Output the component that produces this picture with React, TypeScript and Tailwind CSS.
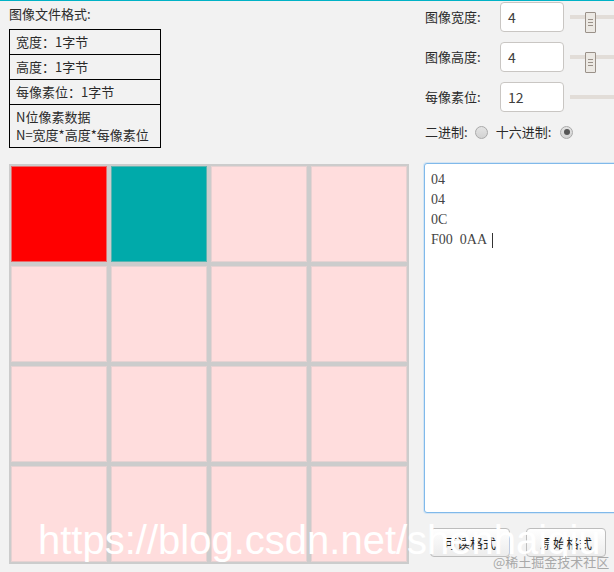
import React from "react";

const CJK = { fontFamily: '"Noto Sans CJK SC", "Noto Sans", sans-serif' };

const cells = [
  "bg-[#ff0000] border-[#e86a6a]",
  "bg-[#00aaaa] border-[#5cb4b0]",
  "bg-[#ffdddd] border-[#e6d2d2]",
  "bg-[#ffdddd] border-[#e6d2d2]",
];

function Slider({ thumb }: { thumb: boolean }) {
  return (
    <div className="relative ml-[6px] h-[29px] flex-1 flex items-center">
      <div className="h-[4px] w-full bg-[#e2ddd8]" />
      {thumb && (
        <div className="absolute left-[15px] top-[9px] flex h-[21px] w-[11px] flex-col items-center justify-center gap-[2px] rounded-[1px] border border-[#9a9189] bg-[#ece9e4]">
          <div className="h-px w-[5px] bg-[#9a9189]" />
          <div className="h-px w-[5px] bg-[#9a9189]" />
          <div className="h-px w-[5px] bg-[#9a9189]" />
        </div>
      )}
    </div>
  );
}

function InputRow({ label, value, thumb }: { label: string; value: string; thumb: boolean }) {
  return (
    <div className="flex h-[30px] items-center">
      <div className="w-[76px] shrink-0 pl-[1px] text-[13px] leading-[16px] text-[#2b2b2b]">{label}</div>
      <div className="flex h-[30px] w-[64px] shrink-0 items-center rounded-[4px] border border-[#c9c6c3] bg-white pl-[7px] text-[14px] text-[#404040]">
        {value}
      </div>
      <Slider thumb={thumb} />
    </div>
  );
}

function Radio({ checked }: { checked: boolean }) {
  return (
    <div className="flex h-[13px] w-[13px] items-center justify-center rounded-full border border-[#a9a9a9] bg-gradient-to-b from-[#e4e4e4] to-[#d2d2d2]">
      {checked && <div className="h-[6px] w-[6px] rounded-full bg-[#555]" />}
    </div>
  );
}

export default function App() {
  return (
    <div
      className="relative h-[572px] w-[614px] overflow-hidden border-t border-[#00b2c6] bg-[#f2f2f2] text-[#2b2b2b]"
      style={CJK}
    >
      {/* top section */}
      <div className="flex h-[162px]">
        <div className="w-[424px] shrink-0 pl-[9px]">
          <div className="mt-[5px] h-[16px] text-[13px] leading-[16px]">图像文件格式:</div>
          <div className="mt-[7px] w-[152px] divide-y divide-black border border-black text-[13px]">
            <div className="flex h-[25px] items-center pl-[6px] leading-[16px]">宽度：1字节</div>
            <div className="flex h-[25px] items-center pl-[6px] leading-[16px]">高度：1字节</div>
            <div className="flex h-[25px] items-center pl-[6px] leading-[16px]">每像素位：1字节</div>
            <div className="h-[42px] pl-[6px] pt-[3px] leading-[18px]">
              <div>N位像素数据</div>
              <div>N=宽度*高度*每像素位</div>
            </div>
          </div>
        </div>
        <div className="flex min-w-0 flex-1 flex-col pt-[1px]">
          <div className="flex flex-col gap-[10px]">
            <InputRow label="图像宽度:" value="4" thumb />
            <InputRow label="图像高度:" value="4" thumb />
            <InputRow label="每像素位:" value="12" thumb={false} />
          </div>
          <div className="mt-[10px] flex h-[20px] items-center text-[13px] leading-[16px]">
            <span className="pl-[1px]">二进制:</span>
            <span className="ml-[7px]"><Radio checked={false} /></span>
            <span className="ml-[8px]">十六进制:</span>
            <span className="ml-[9px]"><Radio checked /></span>
          </div>
        </div>
      </div>

      {/* bottom section */}
      <div className="flex">
        <div className="w-[424px] shrink-0 pl-[9px] pt-[1px]">
          <div className="grid w-[400px] grid-cols-4 gap-[4px] bg-[#cccccc] p-[2px]">
            {Array.from({ length: 16 }).map((_, i) => (
              <div
                key={i}
                className={`h-[96px] border ${i < 4 ? cells[i] : "bg-[#ffdddd] border-[#e6d2d2]"}`}
              />
            ))}
          </div>
        </div>
        <div className="min-w-0 flex-1">
          <div
            className="h-[350px] w-[200px] rounded-tl-[3px] rounded-bl-[3px] border border-[#80b9ea] bg-white pl-[6px] pt-[6px] text-[14px] leading-[20px] text-[#444] shadow-[0_0_0_1px_rgba(160,205,245,0.35)]"
            style={{ fontFamily: '"Liberation Serif", serif' }}
          >
            <div>04</div>
            <div>04</div>
            <div>0C</div>
            <div className="flex items-center">
              <span className="whitespace-pre">F00  0AA </span>
              <span className="ml-[2px] inline-block h-[15px] w-px bg-[#333]" />
            </div>
          </div>
          <div className="mt-[15px] flex gap-[16px] pl-[6px]">
            <button className="flex h-[29px] w-[80px] shrink-0 items-center justify-center rounded-[4px] border border-[#bdbdbd] bg-gradient-to-b from-white to-[#ececec] text-[13px] text-[#222]">
              可读格式
            </button>
            <button className="flex h-[29px] w-[80px] shrink-0 items-center justify-center rounded-[4px] border border-[#bdbdbd] bg-gradient-to-b from-white to-[#ececec] text-[13px] text-[#222]">
              原始格式
            </button>
          </div>
        </div>
      </div>

      {/* watermarks */}
      <div
        className="pointer-events-none absolute left-[38px] top-[519px] whitespace-nowrap text-[40px] leading-[40px] text-white"
        style={{ fontFamily: '"Liberation Sans", Arial, sans-serif' }}
      >
        https://blog.csdn.net/shenhaiqiu
      </div>
      <div className="pointer-events-none absolute left-[493px] top-[553px] whitespace-nowrap text-[13px] leading-[16px] text-[#a9a9a9]">
        @稀土掘金技术社区
      </div>
    </div>
  );
}
